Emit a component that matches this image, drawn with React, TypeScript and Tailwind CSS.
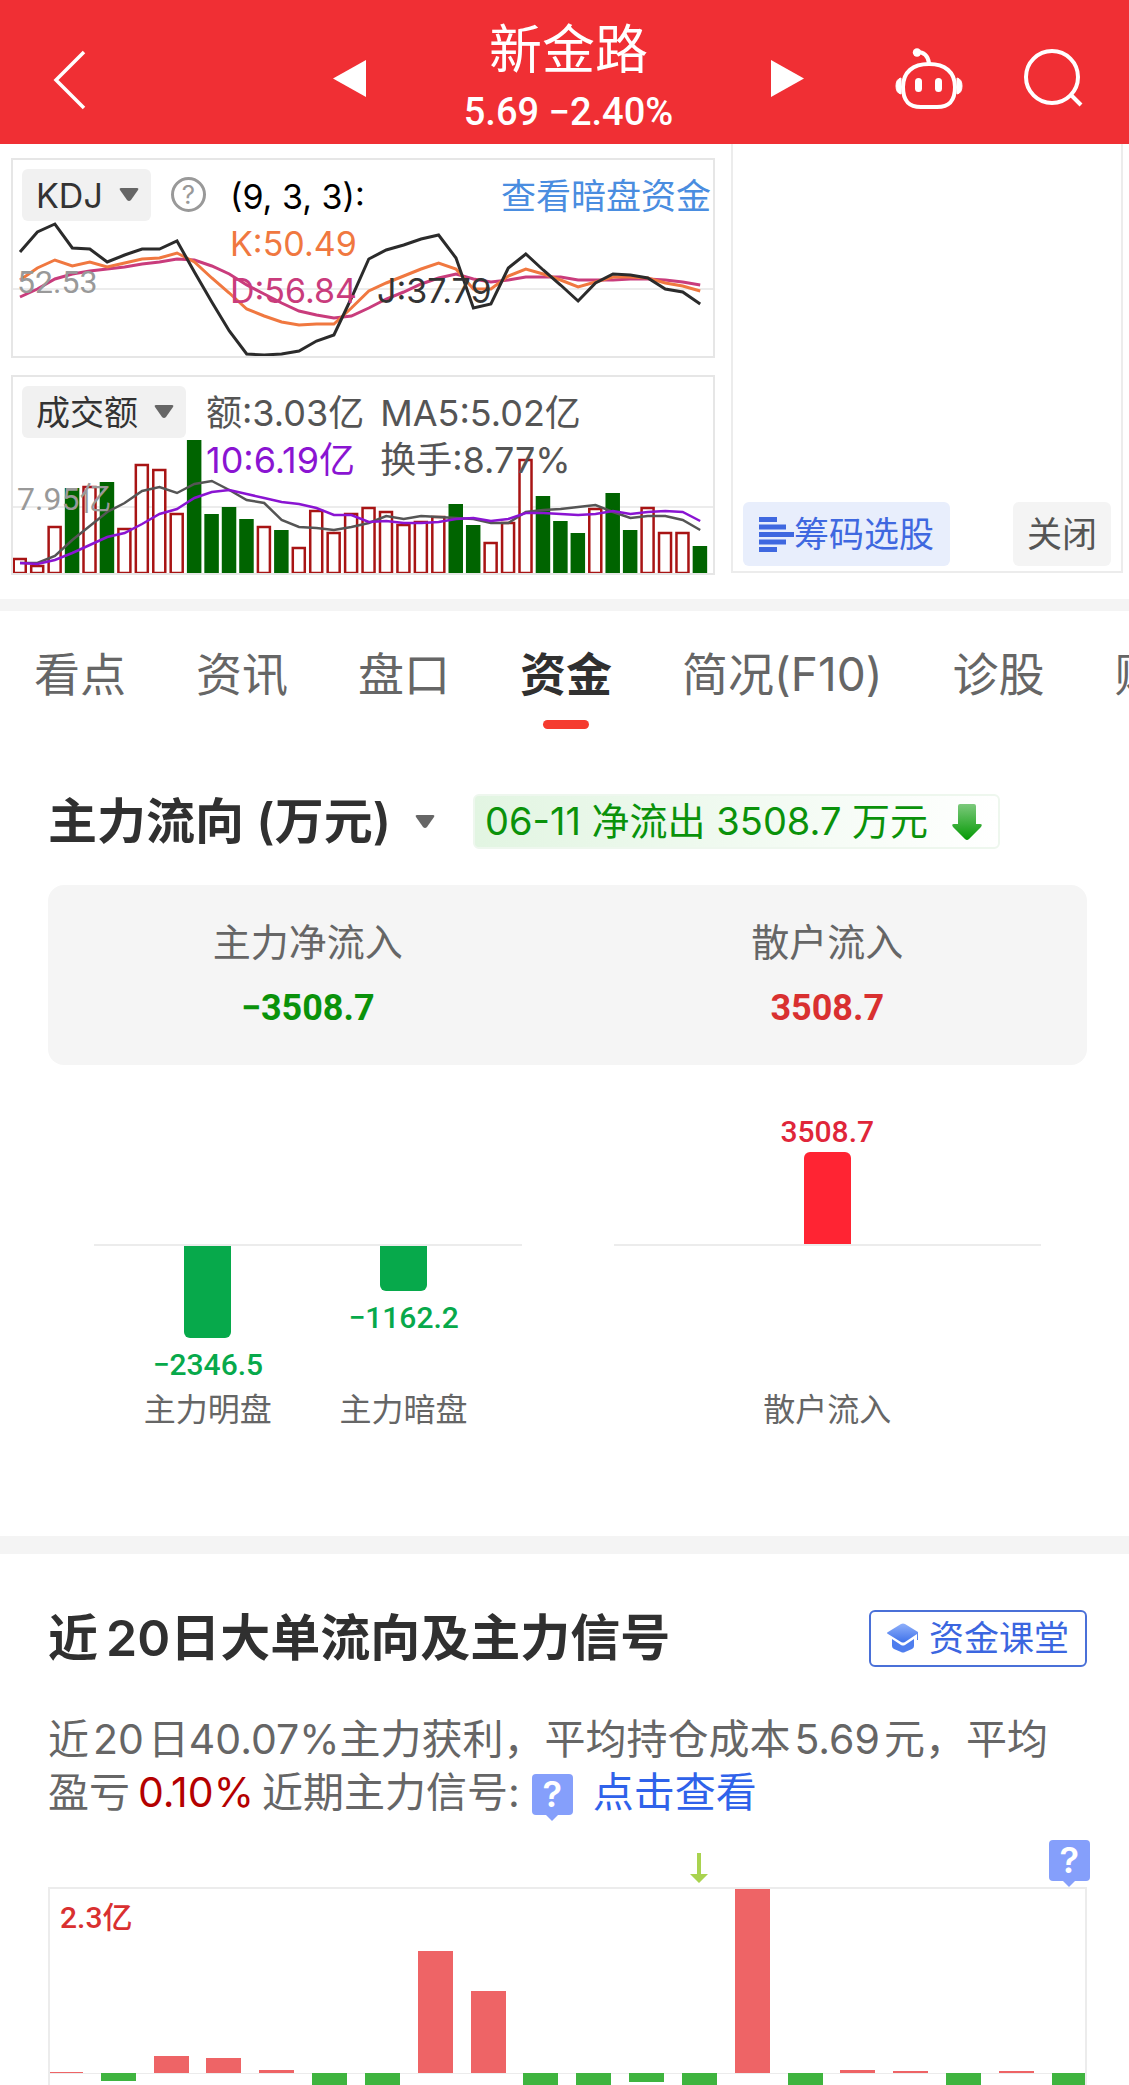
import { useState } from "react";

const TABS = ["看点", "资讯", "盘口", "资金", "简况(F10)", "诊股", "财务"];

// y positions inside a 704 x 200 panel, one value per trading day
const K_LINE = [
  122, 110, 102, 108, 104, 109, 105, 101, 100, 95, 104, 120, 135, 151, 158, 164, 167, 166, 166, 150,
  133, 125, 118, 111, 105, 111, 131, 131, 118, 111, 116, 122, 129, 124, 119, 119, 120, 125, 128, 133,
];
const D_LINE = [
  139, 131, 121, 116, 113, 111, 109, 106, 104, 101, 102, 108, 116, 127, 136, 145, 153, 157, 160, 158,
  150, 141, 134, 126, 120, 116, 121, 124, 122, 119, 119, 119, 122, 122, 122, 121, 121, 122, 124, 127,
];
const J_LINE = [
  94, 74, 66, 90, 91, 104, 97, 91, 91, 83, 114, 144, 173, 196, 197, 196, 193, 183, 177, 140,
  101, 92, 87, 81, 77, 100, 150, 146, 110, 96, 112, 127, 143, 125, 116, 117, 120, 131, 134, 146,
];
const MA5 = [
  188, 188, 181, 165, 151, 137, 128, 116, 112, 118, 109, 106, 115, 125, 128, 145, 152, 153, 155, 152,
  148, 141, 144, 141, 142, 143, 144, 148, 148, 137, 135, 134, 132, 130, 137, 143, 141, 141, 145, 155,
];
const MA10 = [
  188, 189, 185, 178, 170, 162, 158, 149, 139, 134, 123, 117, 115, 119, 123, 127, 129, 133, 140, 140,
  147, 146, 148, 148, 147, 144, 143, 146, 144, 138, 138, 139, 140, 139, 136, 139, 137, 136, 137, 146,
];
const VOLUME_TOPS = [
  183, 190, 151, 113, 111, 107, 153, 89, 94, 138, 65, 139, 132, 144, 151, 155, 172, 135, 157, 138,
  132, 136, 149, 146, 141, 129, 150, 167, 147, 84, 121, 146, 158, 133, 118, 155, 132, 157, 157, 171,
];
const VOLUME_DOWN = [3, 5, 10, 11, 12, 13, 15, 25, 26, 30, 31, 32, 34, 35, 39];

// positive is an inflow drawn above the axis, negative an outflow below it
const FLOWS = [1, -8, 17, 15, 3, -40, -40, 122, 82, -40, -40, -9, -40, 184, -40, 3, 2, -40, 2, -40];

const toPoints = (values: number[]) =>
  values.map((y, i) => `${(9 + i * 17.44).toFixed(1)},${y}`).join(" ");

function Caret() {
  return (
    <svg viewBox="0 0 20 14" className="pointer-events-none w-[20px] h-[14px]" aria-hidden="true">
      <path d="M2 0h16q2 0 1 2l-7 10q-2 2-4 0L1 2q-1-2 1-2z" fill="#666" />
    </svg>
  );
}

function IndicatorSelect({ name, label }: { name: string; label: string }) {
  return (
    <label className="relative flex items-center shrink-0 h-[52px] rounded-md bg-[#f1f1f1]">
      <select
        aria-label={label}
        className="appearance-none bg-transparent h-full pl-[14px] pr-[48px] text-[34px] text-[#333]"
      >
        <option>{name}</option>
      </select>
      <span className="pointer-events-none absolute right-3">
        <Caret />
      </span>
    </label>
  );
}

function QuestionBadge() {
  return (
    <span className="relative inline-flex flex-col items-center w-[41px] shrink-0">
      <span className="w-full h-[41px] rounded bg-[#859ffb] text-white text-[36px] leading-[41px] font-semibold text-center">
        ?
      </span>
      <svg viewBox="0 0 14 7" className="w-[14px] h-[7px] -mt-px" aria-hidden="true">
        <path d="M0 0h14L7 7z" fill="#859ffb" />
      </svg>
    </span>
  );
}

function Header() {
  return (
    <header className="bg-[#f02f34] text-white h-36 grid grid-cols-[1fr_480px_1fr] items-center">
      <div className="pt-4 pl-[52px]">
        <button aria-label="返回" className="block">
          <svg viewBox="0 0 34 60" className="w-[34px] h-[60px]" fill="none" stroke="currentColor">
            <path d="M32 2L4 30l28 28" strokeWidth="3.5" />
          </svg>
        </button>
      </div>
      <div className="flex items-center justify-between pl-2">
        <button aria-label="上一只" className="pt-3">
          <svg viewBox="0 0 33 37" className="w-[33px] h-[37px]" fill="currentColor">
            <path d="M33 0v37L0 18.5z" />
          </svg>
        </button>
        <div className="text-center pt-3">
          <h1 className="text-[53px] leading-[68px]">新金路</h1>
          <p className="font-[Roboto] font-medium text-[38px] leading-[56px]">5.69 −2.40%</p>
        </div>
        <button aria-label="下一只" className="pt-3">
          <svg viewBox="0 0 33 37" className="w-[33px] h-[37px]" fill="currentColor">
            <path d="M0 0v37l33-18.5z" />
          </svg>
        </button>
      </div>
      <div className="flex items-center justify-end gap-[60px] pr-[46px] pt-3">
        <button aria-label="智能助手">
          <svg viewBox="0 0 70 64" className="w-[70px] h-[64px]" fill="none" stroke="currentColor">
            <circle cx="24" cy="6.500" r="4.200" fill="currentColor" stroke="none" />
            <path d="M24 6c7 0 11 4 12 11" strokeWidth="4" strokeLinecap="round" />
            <path
              d="M36 18c16 0 26 8 26 23 0 14-6 20-18 20H28c-12 0-18-6-18-20 0-15 10-23 26-23z"
              strokeWidth="4"
            />
            <path d="M8 32q-5 1-5 8t5 8zM64 32q5 1 5 8t-5 8z" fill="currentColor" strokeWidth="1" />
            <rect x="22" y="32" width="7" height="14" rx="3.500" fill="currentColor" stroke="none" />
            <rect x="42" y="32" width="7" height="14" rx="3.500" fill="currentColor" stroke="none" />
          </svg>
        </button>
        <button aria-label="搜索">
          <svg viewBox="0 0 60 60" className="w-[60px] h-[60px]" fill="none" stroke="currentColor">
            <circle cx="29" cy="29" r="26" strokeWidth="4" />
            <path d="M47 46l11 11" strokeWidth="4" />
          </svg>
        </button>
      </div>
    </header>
  );
}

function KdjPanel() {
  return (
    <div className="relative h-[200px] border-2 border-[#e6e6e6]">
      <svg
        viewBox="2 2 700 196"
        preserveAspectRatio="none"
        className="absolute inset-0 w-full h-full"
        fill="none"
        strokeWidth="3"
      >
        <path d="M0 131H704" stroke="#e6e6e6" strokeWidth="1.500" />
        <polyline points={toPoints(D_LINE)} stroke="#c93c7c" />
        <polyline points={toPoints(K_LINE)} stroke="#f07840" />
        <polyline points={toPoints(J_LINE)} stroke="#2b2b2b" />
      </svg>
      <span className="absolute left-1 top-[102px] font-[Roboto] text-[32px] leading-[40px] text-[#999]">
        52.53
      </span>
      <div className="relative flex items-start pl-[9px] pt-[9px] text-[34px]">
        <IndicatorSelect name="KDJ" label="技术指标" />
        <button
          aria-label="指标说明"
          className="ml-[20px] mt-2 size-[35px] shrink-0 rounded-full border-[3px] border-[#999] text-[#999] text-[26px] leading-[28px]"
        >
          ?
        </button>
        <div className="ml-6 mt-1 flex-1 leading-[47px] whitespace-nowrap">
          <div className="flex justify-between text-black">
            <span>(9, 3, 3):</span>
            <a href="#dark" className="pr-[2px] text-[35px] text-[#4a8de0]">
              查看暗盘资金
            </a>
          </div>
          <div className="text-[#f07840]">K:50.49</div>
          <div className="flex gap-5">
            <span className="text-[#c93c7c]">D:56.84</span>
            <span className="text-[#333]">J:37.79</span>
          </div>
        </div>
      </div>
    </div>
  );
}

function VolumePanel() {
  return (
    <div className="relative h-[200px] border-2 border-[#e6e6e6]">
      <svg
        viewBox="2 2 700 196"
        preserveAspectRatio="none"
        className="absolute inset-0 w-full h-full"
        fill="none"
        strokeWidth="2.5"
      >
        <path d="M0 132H704" stroke="#e6e6e6" strokeWidth="1.500" />
        {VOLUME_TOPS.map((top, i) => {
          const x = 1.5 + i * 17.44;
          return VOLUME_DOWN.includes(i) ? (
            <rect key={i} x={x} y={top} width="14.500" height={199 - top} fill="#006400" />
          ) : (
            <rect
              key={i}
              x={x + 1.25}
              y={top + 1}
              width="12"
              height={197 - top}
              fill="#fff"
              stroke="#a81414"
            />
          );
        })}
        <polyline points={toPoints(MA5)} stroke="#555" />
        <polyline points={toPoints(MA10)} stroke="#8a14d2" />
      </svg>
      <span className="absolute left-1 top-[102px] font-[Roboto,'Noto_Sans_CJK_SC'] text-[32px] leading-[40px] text-[#999]">
        7.95亿
      </span>
      <div className="relative flex items-start pl-[9px] pt-[9px] text-[36px]">
        <IndicatorSelect name="成交额" label="成交指标" />
        <div className="ml-5 mt-1 grid grid-cols-[auto_auto] gap-x-4 leading-[47px] text-[#555] whitespace-nowrap">
          <span>额:3.03亿</span>
          <span>MA5:5.02亿</span>
          <span className="text-[#8a14d2]">10:6.19亿</span>
          <span>换手:8.77%</span>
        </div>
      </div>
    </div>
  );
}

function ChipPanel() {
  return (
    <div className="flex items-end justify-between mb-[26px] pl-[10px] pr-[10px] pb-[5px] border-2 border-t-0 border-[#ececec] text-[35px]">
      <button className="flex items-center h-16 px-4 rounded-md bg-[#e8eefc] text-[#3f68e0] whitespace-nowrap">
        <svg viewBox="0 0 35 35" className="w-[35px] h-[35px]" fill="currentColor" aria-hidden="true">
          <path d="M0 0h18v5H0zM0 7.500h27v5H0zM0 15h35v5H0zM0 22.500h27v5H0zM0 30h18v5H0z" />
        </svg>
        筹码选股
      </button>
      <button className="h-16 px-[14px] rounded-md bg-[#f4f4f4] text-[#555] whitespace-nowrap">
        关闭
      </button>
    </div>
  );
}

function MainFlow() {
  return (
    <section className="pl-12 pr-[42px] pt-[65px] pb-[104px]">
      <div className="flex items-center h-[55px]">
        <h2 className="relative flex items-center text-[#303030]">
          <select
            aria-label="流向类型"
            className="appearance-none bg-transparent pr-[44px] text-[49px] leading-[64px] font-semibold"
          >
            <option>主力流向 (万元)</option>
          </select>
          <span className="pointer-events-none absolute right-0 flex">
            <Caret />
          </span>
        </h2>
        <p className="ml-[38px] flex items-center h-full pl-[10px] pr-4 rounded-md border-2 border-[#eef7ee] bg-linear-to-r from-[#e2f5e2] to-white text-[38px] text-[#0a920a] whitespace-nowrap">
          06-11 净流出 3508.7 万元
          <svg viewBox="0 0 30 36" className="ml-6 w-[30px] h-[36px]" aria-hidden="true">
            <defs>
              <linearGradient id="down" x1="0" y1="0" x2="0" y2="1">
                <stop offset="0" stopColor="#7cc97c" />
                <stop offset="1" stopColor="#059a05" />
              </linearGradient>
            </defs>
            <path d="M8 0h14q2 0 2 2v18h4q3 0 1 3L17 35q-2 2-4 0L1 23q-2-3 1-3h4V2q0-2 2-2z" fill="url(#down)" />
          </svg>
        </p>
      </div>

      <dl className="mt-9 grid grid-cols-2 h-[180px] rounded-2xl bg-[#f5f5f5] text-center">
        <div className="pt-[29px]">
          <dt className="text-[38px] leading-[56px] text-[#666]">主力净流入</dt>
          <dd className="mt-[10px] font-[Roboto] font-bold text-[36px] leading-[56px] text-[#0a920a]">−3508.7</dd>
        </div>
        <div className="pt-[29px]">
          <dt className="text-[38px] leading-[56px] text-[#666]">散户流入</dt>
          <dd className="mt-[10px] font-[Roboto] font-bold text-[36px] leading-[56px] text-[#d93030]">3508.7</dd>
        </div>
      </dl>

      <div className="grid grid-cols-2 text-center text-[32px] leading-[44px] text-[#666]">
        <div className="px-[46px] pt-[179px]">
          <div className="h-[2px] bg-[#ececec]" />
          <div className="grid grid-cols-2 pl-4 pr-5">
            <div className="flex flex-col items-center">
              <div className="flex flex-col items-center h-[142px]">
                <div className="w-[47px] h-[92px] rounded-b-md bg-[#07a94b]" />
                <span className="mt-[5px] font-[Roboto] font-medium text-[30px] text-[#07a94b]">−2346.5</span>
              </div>
              主力明盘
            </div>
            <div className="flex flex-col items-center">
              <div className="flex flex-col items-center h-[142px]">
                <div className="w-[47px] h-[45px] rounded-b-md bg-[#07a94b]" />
                <span className="mt-[5px] font-[Roboto] font-medium text-[30px] text-[#07a94b]">−1162.2</span>
              </div>
              主力暗盘
            </div>
          </div>
        </div>
        <div className="px-[46px]">
          <div className="flex flex-col items-center justify-end h-[179px]">
            <span className="font-[Roboto] font-medium text-[30px] leading-[40px] text-[#e0263a]">3508.7</span>
            <div className="w-[47px] h-[92px] rounded-t-md bg-[#ff2433]" />
          </div>
          <div className="h-[2px] bg-[#ececec]" />
          <div className="pt-[142px]">散户流入</div>
        </div>
      </div>
    </section>
  );
}

function BigOrders() {
  return (
    <section className="pl-12 pr-[42px] pt-[52px]">
      <div className="flex items-center justify-between h-16">
        <h2 className="text-[50px] font-semibold text-[#303030]">
          近<span className="ml-2">20</span>日大单流向及主力信号
        </h2>
        <button className="flex items-center gap-[10px] h-[57px] pl-4 pr-4 rounded-md border-2 border-[#4a70d8] text-[35px] text-[#3b66e0] whitespace-nowrap">
          <svg viewBox="0 0 32 30" className="w-[32px] h-[30px]" aria-hidden="true">
            <defs>
              <linearGradient id="cap" x1="0" y1="0" x2="0" y2="1">
                <stop offset="0" stopColor="#8fb0fa" />
                <stop offset="1" stopColor="#3f72ea" />
              </linearGradient>
            </defs>
            <path d="M14 1q2-1 4 0l13 8v8h-1v-6L18 19q-2 1-4 0L1 11q-2-1 0-2z" fill="url(#cap)" />
            <path d="M5 16l9 6q2 1 4 0l9-6v7q0 2-2 3l-7 3q-2 1-4 0l-7-3q-2-1-2-3z" fill="#4f7eee" />
          </svg>
          资金课堂
        </button>
      </div>

      <p className="mt-[43px] text-[41px] leading-[53px] text-[#666]">
        近<span className="mx-1">20</span>日40.07%主力获利，平均持仓成本
        <span className="mx-1">5.69</span>元，平均盈亏
        <span className="mx-2 text-[#b40000]">0.10%</span>近期主力信号:
        <span className="inline-block h-[53px] ml-3 align-top">
          <QuestionBadge />
        </span>
        <a href="#signal" className="ml-5 text-[#2f62ea]">
          点击查看
        </a>
      </p>

      <div className="mt-5 flex justify-between items-end h-12">
        {FLOWS.map((_, i) => (
          <div key={i} className="w-[35px] flex justify-center">
            {i === 12 && (
              <svg viewBox="0 0 18 30" className="w-[18px] h-[30px] mb-1" aria-label="卖出信号">
                <path d="M7 0h4v21h7l-9 9-9-9h7z" fill="#a9d34f" />
              </svg>
            )}
            {i === 19 && <QuestionBadge />}
          </div>
        ))}
      </div>
      <div className="relative h-[198px] border-2 border-b-0 border-[#ececec] overflow-hidden">
        <span className="absolute left-[10px] top-[7px] font-[Roboto,'Noto_Sans_CJK_SC'] font-medium text-[30px] leading-[44px] text-[#d93030]">
          2.3亿
        </span>
        <div className="absolute inset-x-0 top-[184px] h-px bg-[#ececec]" />
        <div className="-mx-[2px] flex justify-between">
          {FLOWS.map((v, i) => (
            <div key={i} className="w-[35px]">
              <div className="h-[184px] flex items-end">
                {v > 0 && <div className="w-full bg-[#ee6466]" style={{ height: v }} />}
              </div>
              {v < 0 && <div className="relative w-full bg-[#3fb43f]" style={{ height: -v }} />}
            </div>
          ))}
        </div>
      </div>
    </section>
  );
}

export default function App() {
  const [tab, setTab] = useState<string>("资金");

  return (
    <main className="bg-white overflow-hidden font-[Inter,'Noto_Sans_CJK_SC',sans-serif] text-[#333]">
      <Header />

      <section className="grid grid-cols-[704fr_392fr] gap-x-4 pl-[11px] pr-[6px]">
        <div className="flex flex-col gap-[17px] pt-[14px] pb-6">
          <KdjPanel />
          <VolumePanel />
        </div>
        <ChipPanel />
      </section>

      <div className="h-3 bg-[#f4f4f4]" />

      <nav className="flex gap-[70px] pl-[34px] pt-[31px] overflow-hidden whitespace-nowrap">
        {TABS.map((name) => (
          <button
            key={name}
            onClick={() => setTab(name)}
            className="flex flex-col items-center shrink-0 text-[46px] leading-[64px]"
          >
            <span className={name === tab ? "font-semibold text-[#303030]" : "text-[#666]"}>{name}</span>
            {name === tab && <span className="mt-[14px] w-[46px] h-[9px] rounded-full bg-[#f53b2f]" />}
          </button>
        ))}
      </nav>

      <MainFlow />

      <div className="h-[18px] bg-[#f4f4f4]" />

      <BigOrders />
    </main>
  );
}
